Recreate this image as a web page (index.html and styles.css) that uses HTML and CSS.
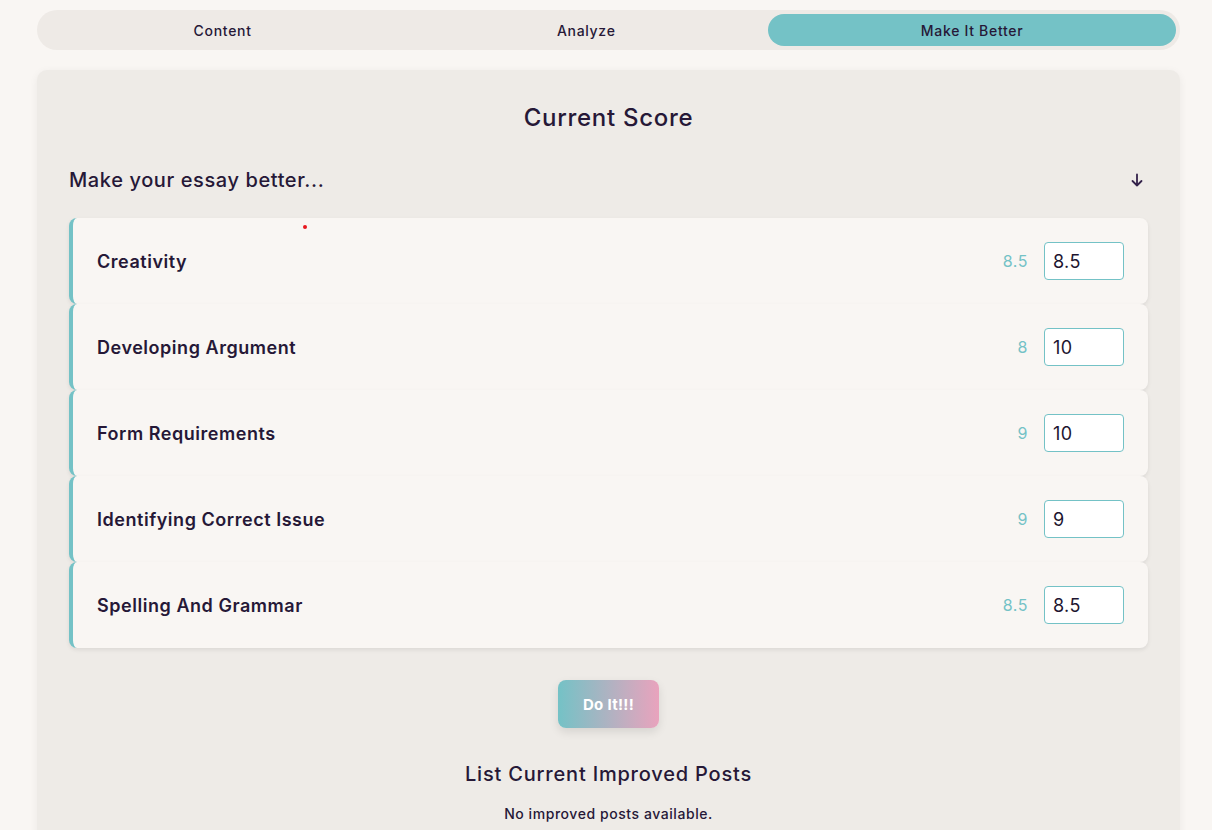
FILE: index.html
```html
<!DOCTYPE html>
<html>
<head>
<meta charset="utf-8">
<link rel="stylesheet" href="styles.css">
</head>
<body>
<div class="page">
  <nav class="tabs">
    <div class="tab">Content</div>
    <div class="tab">Analyze</div>
    <div class="tab active">Make It Better</div>
  </nav>
  <section class="panel">
    <h1 class="title">Current Score</h1>
    <div class="section-head">
      <h2>Make your essay better...</h2>
      <svg class="arrow" width="14" height="14" viewBox="0 0 14 14" fill="none" stroke="#33224a" stroke-width="1.8" stroke-linecap="round" stroke-linejoin="round"><path d="M7 1.5v11M2.5 8l4.5 4.5L11.5 8"/></svg>
    </div>
    <div class="rows">
      <div class="row"><span class="dot"></span><span class="label">Creativity</span><span class="score">8.5</span><input class="inp" value="8.5"></div>
      <div class="row"><span class="label">Developing Argument</span><span class="score">8</span><input class="inp" value="10"></div>
      <div class="row"><span class="label">Form Requirements</span><span class="score">9</span><input class="inp" value="10"></div>
      <div class="row"><span class="label">Identifying Correct Issue</span><span class="score">9</span><input class="inp" value="9"></div>
      <div class="row"><span class="label">Spelling And Grammar</span><span class="score">8.5</span><input class="inp" value="8.5"></div>
    </div>
    <div class="actions"><button class="do">Do It!!!</button></div>
    <h2 class="list-title">List Current Improved Posts</h2>
    <p class="empty">No improved posts available.</p>
  </section>
</div>
</body>
</html>
```
FILE: styles.css
```css
* { box-sizing: border-box; }
html, body { margin: 0; padding: 0; }
body {
  background: #f9f6f3;
  font-family: "Inter", "Noto Sans", sans-serif;
  color: #261837;
  height: 830px;
  overflow: hidden;
  letter-spacing: 0.035em;
}
.page {
  margin: 0 32px 0 37px;
  padding-top: 10px;
}
.tabs {
  display: flex;
  background: #eeeae6;
  border-radius: 20px;
  height: 40px;
  padding: 4px;
  align-items: center;
}
.tab {
  flex: 1 1 auto;
  height: 32px;
  display: flex;
  align-items: center;
  justify-content: center;
  font-size: 14px;
  font-weight: 500;
  letter-spacing: 0.05em;
  border-radius: 16px;
  color: #261837;
}
.tab.active {
  background: #74c2c6;
}
.panel {
  margin-top: 20px;
  background: #eeebe7;
  border-radius: 10px 10px 0 0;
  box-shadow: 0 2px 8px rgba(0,0,0,0.06);
  padding: 30px 32px 40px;
  height: 800px;
}
.title {
  margin: 0;
  text-align: center;
  font-size: 24px;
  font-weight: 500;
  line-height: 36px;
  letter-spacing: 0.03em;
}
.section-head {
  display: flex;
  justify-content: space-between;
  align-items: center;
  margin-top: 29px;
  height: 30px;
  padding-right: 2px;
}
.section-head h2 {
  margin: 0;
  font-size: 20px;
  font-weight: 500;
  letter-spacing: 0.03em;
}
.arrow { margin-right: 2px; }
.rows {
  margin-top: 23px;
  display: flex;
  flex-direction: column;
}
.row {
  position: relative;
  display: flex;
  align-items: center;
  height: 86px;
  background: #f9f6f3;
  border-left: 4px solid #74c2c6;
  border-radius: 8px;
  box-shadow: 0 2px 4px rgba(0,0,0,0.08);
  padding: 0 24px;
}
.dot {
  position: absolute;
  left: 230px;
  top: 7px;
  width: 4px;
  height: 4px;
  border-radius: 50%;
  background: #e8161d;
}
.label {
  flex: 1;
  font-size: 18px;
  font-weight: 600;
  letter-spacing: 0.03em;
}
.score {
  color: #74c2c6;
  font-size: 16px;
  margin-right: 16px;
}
.inp {
  width: 80px;
  height: 38px;
  border: 1px solid #74c2c6;
  border-radius: 4px;
  background: #fff;
  padding: 0 8px;
  font-family: inherit;
  font-size: 18px;
  letter-spacing: 0.02em;
  color: #1d1530;
}
.actions {
  display: flex;
  justify-content: center;
  margin-top: 32px;
}
.do {
  width: 101px;
  height: 48px;
  border: none;
  border-radius: 8px;
  background: linear-gradient(90deg, #74c2c6, #e9a3bd);
  color: #fff;
  font-family: inherit;
  font-size: 15px;
  font-weight: 700;
  letter-spacing: 0.02em;
  box-shadow: 0 4px 10px rgba(0,0,0,0.1);
}
.list-title {
  margin: 32px 0 0;
  text-align: center;
  font-size: 20px;
  font-weight: 500;
  line-height: 28px;
  letter-spacing: 0.04em;
}
.empty {
  margin: 17px 0 0;
  text-align: center;
  font-size: 14px;
  font-weight: 500;
}
```
